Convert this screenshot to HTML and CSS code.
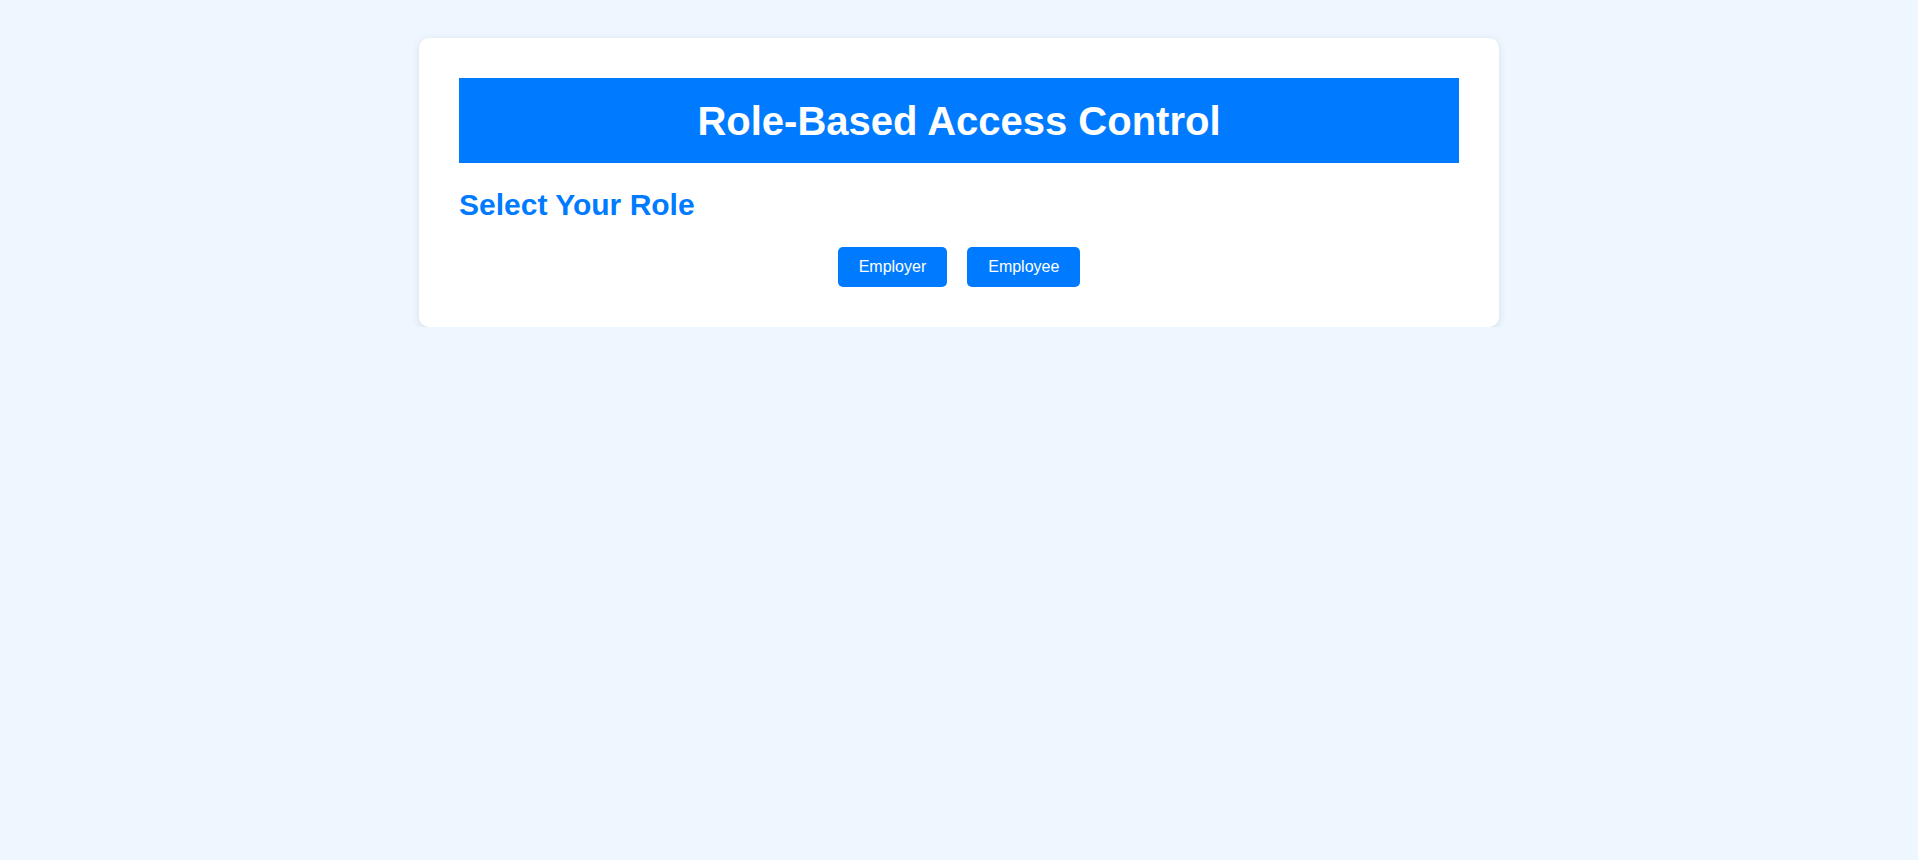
FILE: index.html
```html
<!DOCTYPE html>
<html lang="en">
<head>
<meta charset="utf-8">
<title>Role-Based Access Control</title>
<link rel="stylesheet" href="styles.css">
</head>
<body>
  <div class="container">
    <h1 class="title">Role-Based Access Control</h1>
    <h2 class="subtitle">Select Your Role</h2>
    <div class="roles">
      <button class="role-btn">Employer</button>
      <button class="role-btn">Employee</button>
    </div>
  </div>
</body>
</html>
```
FILE: styles.css
```css
html, body {
  margin: 0;
  padding: 0;
}
body {
  background: #eef6ff;
  font-family: "Liberation Sans", Arial, sans-serif;
  padding-top: 38px;
}
.container {
  box-sizing: border-box;
  width: 1080px;
  margin: 0 auto;
  padding: 40px;
  background: #ffffff;
  border-radius: 10px;
  box-shadow: 0 2px 8px rgba(0, 0, 0, 0.1);
}
.title {
  margin: 0;
  padding: 20px 0 19px;
  background: #007bff;
  color: #ffffff;
  font-size: 40px;
  font-weight: bold;
  text-align: center;
  line-height: 46px;
}
.subtitle {
  margin: 24px 0 25px;
  color: #007bff;
  font-size: 30px;
  font-weight: bold;
  line-height: 35px;
}
.roles {
  display: flex;
  justify-content: center;
  gap: 20px;
}
.role-btn {
  font-family: "Liberation Sans", Arial, sans-serif;
  font-size: 16px;
  line-height: 18px;
  padding: 11px 21px;
  border: none;
  border-radius: 5px;
  background: #007bff;
  color: #ffffff;
  cursor: pointer;
}
```
